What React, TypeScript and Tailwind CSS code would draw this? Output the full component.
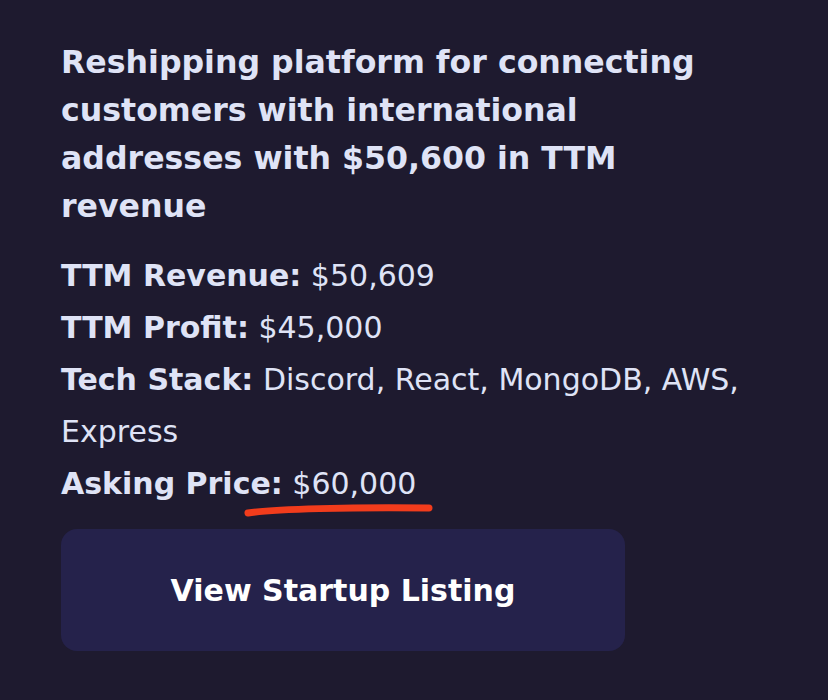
export default function App() {
  const font = { fontFamily: '"DejaVu Sans", Verdana, sans-serif' };
  return (
    <div className="w-[828px] h-[700px] bg-[#1e1a2f] overflow-hidden" style={font}>
      <div className="pl-[61px] pt-[38px]">
        <h2 className="text-[31.6px] leading-[48px] font-bold text-[#dfe3f6] w-[680px]">
          Reshipping platform for connecting customers with international addresses with $50,600 in TTM revenue
        </h2>

        <div className="mt-[20px] text-[30px] leading-[52px] text-[#dfe3f6] w-[730px]">
          <p>
            <span className="font-bold">TTM Revenue:</span> $50,609
          </p>
          <p>
            <span className="font-bold">TTM Profit:</span> $45,000
          </p>
          <p>
            <span className="font-bold">Tech Stack:</span> Discord, React, MongoDB, AWS, Express
          </p>
          <p className="relative">
            <span className="font-bold">Asking Price:</span> $60,000
            {/* hand-drawn underline */}
            <svg
              className="absolute left-[182px] top-[43px]"
              width="192"
              height="18"
              viewBox="0 0 192 18"
            >
              <path
                d="M5 12 C 30 8, 110 6, 186 7"
                stroke="#f23c1c"
                strokeWidth="7"
                strokeLinecap="round"
                fill="none"
              />
            </svg>
          </p>
        </div>

        <button className="mt-[19px] w-[564px] h-[122px] rounded-[16px] bg-[#25224b] text-white text-[30px] font-bold">
          View Startup Listing
        </button>
      </div>
    </div>
  );
}
